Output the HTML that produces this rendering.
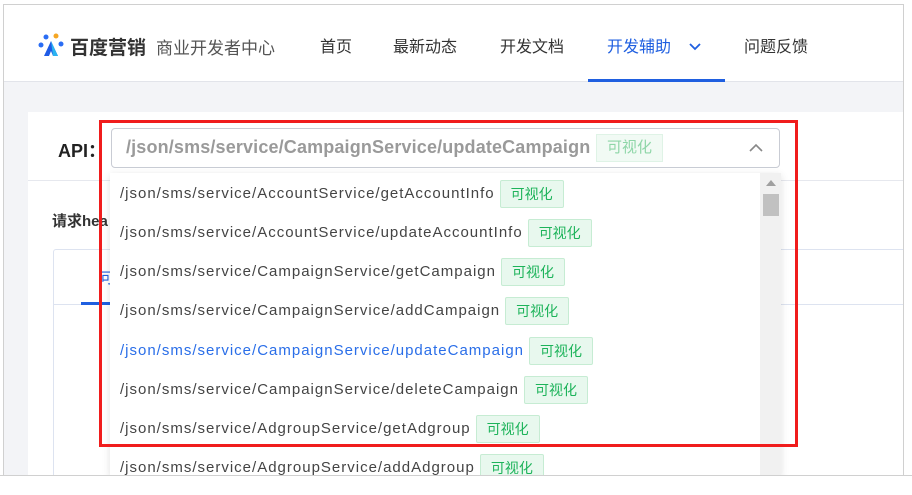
<!DOCTYPE html>
<html><head><meta charset="utf-8"><style>
*{margin:0;padding:0;box-sizing:border-box}
body{width:912px;height:484px;background:#fff;position:relative;overflow:hidden;font-family:"Liberation Sans","Noto Sans CJK SC",sans-serif}
.frame{position:absolute;left:3px;top:4px;width:901px;height:472px;border:1px solid #d0d0d0;background:#f3f4f7;overflow:hidden}
.hdr{position:absolute;left:0;top:0;width:100%;height:77px;background:#fff;border-bottom:1px solid #e2e4ea}
.nav{position:absolute;top:28px;font-size:16px;color:#333}
.card{position:absolute;left:24px;top:107px;width:880px;height:380px;background:#fff}
.abs{position:absolute}
.row{position:absolute;left:120px;font-size:15px;letter-spacing:1px;color:#444;white-space:nowrap;height:28px;line-height:28px;top:1px}
.tag{display:inline-block;vertical-align:top;margin-left:5px;height:28px;line-height:26px;padding:0 10px;border:1px solid #c6ecd3;background:#e8f8ee;color:#1db35a;font-size:14px;letter-spacing:0;border-radius:2px}
</style></head><body>
<div class="frame">
 <div class="hdr">
  <svg class="abs" style="left:33px;top:27px" width="28" height="26" viewBox="0 0 28 26">
   <circle cx="4" cy="13" r="2.5" fill="#2a6df4"/><circle cx="9" cy="5" r="2.5" fill="#2a6df4"/><circle cx="19" cy="4" r="2.5" fill="#f5a623"/><circle cx="24" cy="12" r="2.5" fill="#2a6df4"/>
   <path d="M14 9 L7 24 L12 24 L14 19 L16 24 L21 24 Z" fill="#1e5be6"/><path d="M14 9 L21 24 L16 24 Z" fill="#2bb3f0"/>
  </svg>
  <div class="abs" style="left:66px;top:28px;font-size:19px;font-weight:bold;color:#333">百度营销</div>
  <div class="abs" style="left:152px;top:29px;font-size:17px;color:#555">商业开发者中心</div>
  <div class="nav" style="left:316px">首页</div>
  <div class="nav" style="left:389px">最新动态</div>
  <div class="nav" style="left:496px">开发文档</div>
  <div class="nav" style="left:603px;color:#1f5fe0">开发辅助</div>
  <svg class="abs" style="left:685px;top:38px" width="12" height="8"><path d="M1 1 L6 6 L11 1" stroke="#1f5fe0" stroke-width="1.8" fill="none"/></svg>
  <div class="nav" style="left:740px">问题反馈</div>
  <div class="abs" style="left:584px;top:74px;width:137px;height:3px;background:#1f5fe0"></div>
 </div>
 <div class="card">
  <div class="abs" style="left:30px;top:25px;font-size:18px;font-weight:bold;color:#222">API：</div>
  <div class="abs" style="left:0;top:68px;width:100%;height:1px;background:#e6e8ee"></div>
  <div class="abs" style="left:24px;top:98px;font-size:15px;font-weight:bold;color:#333">请求hea</div>
  <div class="abs" style="left:25px;top:137px;width:860px;height:250px;border:1px solid #dde3f0;border-radius:3px"></div>
  <div class="abs" style="left:25px;top:192px;width:860px;height:1px;background:#dde3f0"></div>
  <div class="abs" style="left:72px;top:155px;font-size:15px;color:#1f5fe0">可</div>
  <div class="abs" style="left:53px;top:190px;width:30px;height:3px;background:#1f5fe0"></div>
 </div>
</div>
<div class="abs" style="left:111px;top:128px;width:669px;height:40px;border:1px solid #c9ccd4;border-radius:4px;background:#fff">
 <div class="abs" style="left:14px;top:8px;font-size:18px;font-weight:bold;letter-spacing:0.15px;color:#9a9a9a">/json/sms/service/CampaignService/updateCampaign</div>
 <div class="abs" style="left:484px;top:5px;height:28px;line-height:26px;padding:0 10px;border:1px solid #dff3e6;background:#f1faf4;color:#8fd6a8;font-size:15px">可视化</div>
 <svg class="abs" style="left:637px;top:14px" width="14" height="9"><path d="M1 8 L7 2 L13 8" stroke="#888" stroke-width="1.6" fill="none"/></svg>
</div>
<div class="abs" style="left:110px;top:173px;width:671px;height:303px;background:#fff;box-shadow:0 2px 8px rgba(0,0,0,.12)">
 <div class="abs" style="left:650px;top:0;width:21px;height:303px;background:#f1f1f1"></div>
 <svg class="abs" style="left:656px;top:7px" width="10" height="6"><path d="M0 6 L5 0 L10 6Z" fill="#a0a0a0"/></svg>
 <div class="abs" style="left:653px;top:21px;width:16px;height:22px;background:#c1c1c1"></div>
</div>
<div class="row" style="top:180px">/json/sms/service/AccountService/getAccountInfo<span class="tag">可视化</span></div>
<div class="row" style="top:219px">/json/sms/service/AccountService/updateAccountInfo<span class="tag">可视化</span></div>
<div class="row" style="top:258px">/json/sms/service/CampaignService/getCampaign<span class="tag">可视化</span></div>
<div class="row" style="top:297px">/json/sms/service/CampaignService/addCampaign<span class="tag">可视化</span></div>
<div class="row" style="top:337px;color:#2a6ee8">/json/sms/service/CampaignService/updateCampaign<span class="tag">可视化</span></div>
<div class="row" style="top:376px">/json/sms/service/CampaignService/deleteCampaign<span class="tag">可视化</span></div>
<div class="row" style="top:415px">/json/sms/service/AdgroupService/getAdgroup<span class="tag">可视化</span></div>
<div class="row" style="top:454px">/json/sms/service/AdgroupService/addAdgroup<span class="tag">可视化</span></div>
<div class="abs" style="left:0;top:475px;width:912px;height:20px;background:#fff;border-top:1px solid #d0d0d0"></div>
<div class="abs" style="left:99px;top:120px;width:699px;height:327px;border:3px solid #f01c1c"></div>
</body></html>
